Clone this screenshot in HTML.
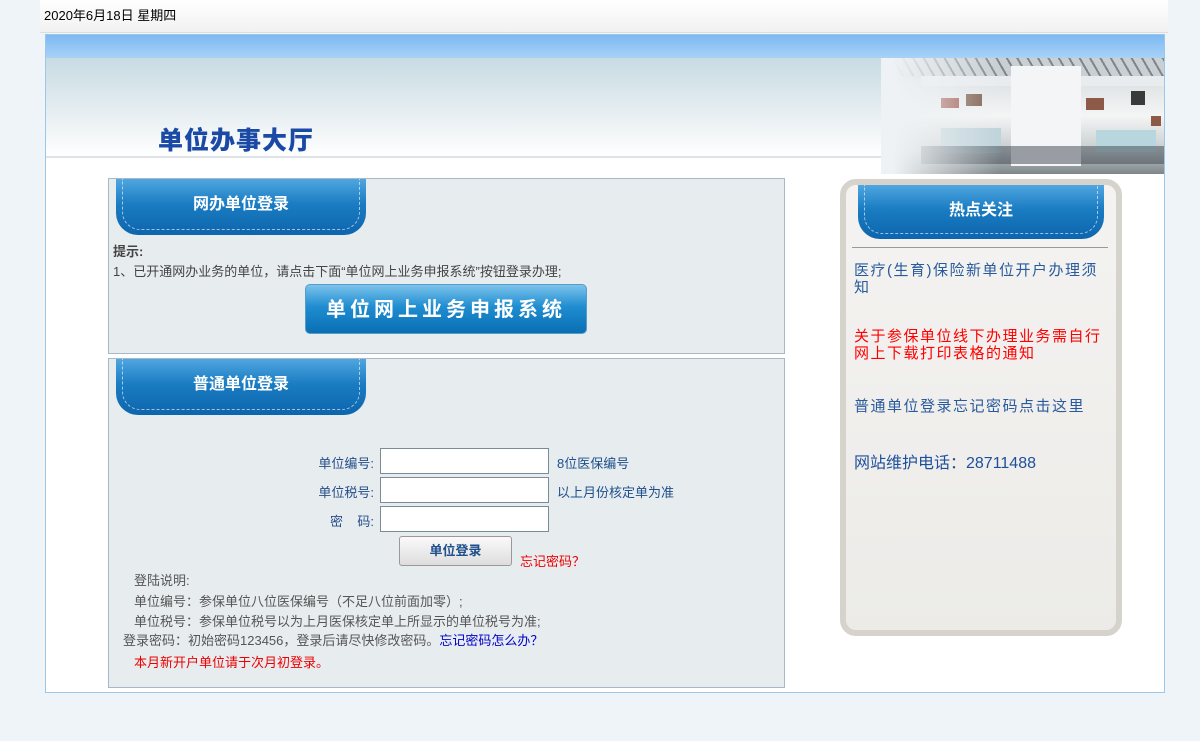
<!DOCTYPE html>
<html><head><meta charset="utf-8"><style>
*{margin:0;padding:0;box-sizing:border-box}
body{width:1200px;height:741px;background:#eef4f7;font-family:"Liberation Sans","Noto Sans CJK SC",sans-serif;font-size:13px;position:relative;overflow:hidden;color:#444}
.abs{position:absolute}
.top{left:40px;top:0;width:1128px;height:33px;background:linear-gradient(#fff,#f1f1f1);border-bottom:1px solid #ddd;font-size:13px;color:#000;padding:5px 4px}
.main{left:45px;top:34px;width:1120px;height:659px;background:#fff;border:1px solid #9cc7ec}
.band{left:0;top:0;width:1118px;height:23px;background:linear-gradient(#7cb9f2,#a8d2f7)}
.hdr{left:0;top:23px;width:1118px;height:100px;background:linear-gradient(#c8dbe3,#eef3f5 70%,#fff);border-bottom:2px solid #dde3e6}
.title{left:112px;top:86px;font-size:25px;font-weight:900;color:#1b4aa6;letter-spacing:1px}
.photo{left:835px;top:23px;width:283px;height:116px;overflow:hidden;background:linear-gradient(#8f989c,#dfe3e5 22%,#f4f5f5 50%,#c6ccce 80%,#7d8589)}
.panel{border:1px solid #a9b8c4;background:#e7ecef}
.tab{width:250px;height:56px;border-radius:0 0 22px 22px;background:linear-gradient(#4fa6e0,#1a7cc2 45%,#0d65ad);color:#fff;font-weight:bold;font-size:16px;text-align:center;line-height:52px}
.tab:after{content:"";position:absolute;left:6px;right:6px;top:0;bottom:5px;border:1px dashed rgba(255,255,255,.6);border-top:none;border-radius:0 0 18px 18px}
.lbl{color:#244e8a;font-size:13px;text-align:right;width:80px}
.inp{width:169px;height:26px;border:1px solid #7a8c98;background:#fff}
.note{color:#1e4f8c}
.rt{font-size:15px;line-height:17px;letter-spacing:1.5px;width:250px}
</style></head><body>
<div class="abs top">2020年6月18日 星期四</div>
<div class="abs main">
 <div class="abs band"></div>
 <div class="abs hdr"></div>
 <div class="abs title">单位办事大厅</div>
 <div class="abs photo">
  <div class="abs" style="left:0;top:0;width:283px;height:18px;background:repeating-linear-gradient(60deg,#7d878b 0 2px,#c9cfd2 2px 9px)"></div>
  <div class="abs" style="left:40px;top:18px;width:243px;height:10px;background:#e9ecee"></div>
  <div class="abs" style="left:130px;top:8px;width:70px;height:100px;background:#f3f5f6"></div>
  <div class="abs" style="left:60px;top:40px;width:18px;height:10px;background:#9a4d40"></div>
  <div class="abs" style="left:85px;top:36px;width:16px;height:12px;background:#7c5a4b"></div>
  <div class="abs" style="left:205px;top:40px;width:18px;height:12px;background:#8e5a48"></div>
  <div class="abs" style="left:250px;top:33px;width:14px;height:14px;background:#3a3a3a"></div>
  <div class="abs" style="left:270px;top:58px;width:10px;height:10px;background:#8e5a48"></div>
  <div class="abs" style="left:60px;top:70px;width:60px;height:25px;background:#bfd3da"></div>
  <div class="abs" style="left:215px;top:72px;width:60px;height:22px;background:#b7d6dd"></div>
  <div class="abs" style="left:40px;top:88px;width:243px;height:18px;background:rgba(60,70,80,.5)"></div>
  <div class="abs" style="left:0;top:0;width:120px;height:116px;background:linear-gradient(90deg,#eef2f4 10%,rgba(238,242,244,0))"></div>
 </div>
</div>

<div class="abs panel" style="left:108px;top:178px;width:677px;height:176px">
 <div class="abs tab" style="left:7px;top:0">网办单位登录</div>
 <div class="abs" style="left:4px;top:62px;font-weight:bold;color:#444">提示:</div>
 <div class="abs" style="left:4px;top:82px;color:#444">1、已开通网办业务的单位，请点击下面“单位网上业务申报系统”按钮登录办理;</div>
 <div class="abs" style="left:196px;top:105px;width:282px;height:50px;border-radius:5px;background:linear-gradient(#7cc3ec,#1f8dd0 45%,#0a6fb4);color:#fff;font-size:20px;font-weight:bold;letter-spacing:4px;text-align:center;line-height:50px;border:1px solid #5a9cc8">单位网上业务申报系统</div>
</div>

<div class="abs panel" style="left:108px;top:358px;width:677px;height:330px">
 <div class="abs tab" style="left:7px;top:0">普通单位登录</div>
 <div class="abs lbl" style="left:185px;top:94px">单位编号:</div>
 <div class="abs inp" style="left:271px;top:89px"></div>
 <div class="abs note" style="left:448px;top:94px">8位医保编号</div>
 <div class="abs lbl" style="left:185px;top:123px">单位税号:</div>
 <div class="abs inp" style="left:271px;top:118px"></div>
 <div class="abs note" style="left:448px;top:123px">以上月份核定单为准</div>
 <div class="abs lbl" style="left:185px;top:152px">密&nbsp;&nbsp;&nbsp;&nbsp;码:</div>
 <div class="abs inp" style="left:271px;top:147px"></div>
 <div class="abs" style="left:290px;top:177px;width:113px;height:30px;border:1px solid #999;border-radius:3px;background:linear-gradient(#fafafa,#ddd);color:#1e4f8c;font-weight:bold;text-align:center;line-height:28px">单位登录</div>
 <div class="abs" style="left:411px;top:192px;color:#e00">忘记密码？</div>
 <div class="abs" style="left:25px;top:211px;color:#555">登陆说明:</div>
 <div class="abs" style="left:25px;top:232px;color:#555">单位编号：参保单位八位医保编号（不足八位前面加零）;</div>
 <div class="abs" style="left:25px;top:252px;color:#555">单位税号：参保单位税号以为上月医保核定单上所显示的单位税号为准;</div>
 <div class="abs" style="left:14px;top:271px;color:#555">登录密码：初始密码123456，登录后请尽快修改密码。<span style="color:#00c">忘记密码怎么办？</span></div>
 <div class="abs" style="left:25px;top:293px;color:#e00">本月新开户单位请于次月初登录。</div>
</div>

<div class="abs" style="left:840px;top:179px;width:282px;height:457px;border:6px solid #d6d3cd;border-radius:16px;background:linear-gradient(#f4f3f1,#ecebe8)">
 <div class="abs tab" style="left:12px;top:0;width:246px;height:54px;line-height:52px">热点关注</div>
 <div class="abs" style="left:6px;top:62px;width:256px;height:1px;background:#999"></div>
 <div class="abs rt" style="left:8px;top:77px;color:#2a5a9e">医疗(生育)保险新单位开户办理须知</div>
 <div class="abs rt" style="left:8px;top:143px;color:#f00">关于参保单位线下办理业务需自行网上下载打印表格的通知</div>
 <div class="abs rt" style="left:8px;top:213px;color:#2a5a9e">普通单位登录忘记密码点击这里</div>
 <div class="abs" style="left:8px;top:264px;font-size:16px;color:#1e4f9c">网站维护电话：28711488</div>
</div>
</body></html>
